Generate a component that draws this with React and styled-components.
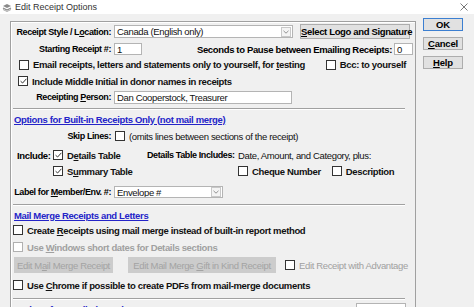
import React from 'react';
import styled, { createGlobalStyle } from 'styled-components';

const Global = createGlobalStyle`
  html, body {
    margin: 0;
    padding: 0;
    background: #f0f0f0;
  }
  body {
    font-family: "Liberation Sans", Arial, sans-serif;
    font-size: 9.5px;
    letter-spacing: -0.35px;
    color: #000;
  }
`;

// Window chrome
const Window = styled.div`
  width: 474px;
  height: 307px;
  overflow: hidden;
  display: flex;
  flex-direction: column;
  background: #f0f0f0;
`;

const TitleBar = styled.div`
  height: 14px;
  flex: none;
  background: #fff;
  display: flex;
  align-items: center;
  padding: 0 6px 0 2px;
  gap: 3px;
  font-size: 9px;
  letter-spacing: 0;
  color: #333;
`;

const TitleText = styled.span`
  flex: 1;
`;

const Body = styled.div`
  display: flex;
  align-items: flex-start;
  padding: 4px 0 0 10px;
`;

const Panel = styled.div`
  margin-top: 3px;
  width: 406px;
  height: 320px;
  border: 1px solid #a0a0a0;
  box-shadow: inset 1px 1px 0 #fff;
  display: flex;
  flex-direction: column;
  padding-left: 2px;
  box-sizing: border-box;
  flex: none;
`;

const Side = styled.div`
  margin-left: 7px;
  display: flex;
  flex-direction: column;
  gap: 6px;
`;

const DialogButton = styled.button`
  width: 40px;
  height: 13px;
  padding: 0;
  font: inherit;
  font-weight: bold;
  font-size: 9.5px;
  letter-spacing: -0.2px;
  background: #e1e1e1;
  border: 1px solid ${(p) => (p.$default ? '#3c7fd1' : '#adadad')};
  color: #000;
  line-height: 11px;
`;

// Rows
const Row = styled.div`
  height: ${(p) => p.$h}px;
  flex: none;
  display: flex;
  align-items: center;
  padding-left: ${(p) => p.$pl || 0}px;
  padding-right: ${(p) => p.$pr || 0}px;
  margin-top: ${(p) => p.$mt || 0}px;
`;

const Cell = styled.div`
  width: ${(p) => p.$w}px;
  flex: none;
  display: flex;
  align-items: center;
  padding-left: ${(p) => p.$pl || 0}px;
  box-sizing: border-box;
`;

const Bold = styled.span`
  font-weight: bold;
  white-space: nowrap;
  font-size: ${(p) => (p.$tight ? '9px' : 'inherit')};
  letter-spacing: ${(p) => (p.$tight ? '-0.4px' : 'inherit')};
`;

const FieldLabel = styled(Bold)`
  width: 98px;
  margin-right: 3px;
  display: flex;
  justify-content: flex-end;
  flex: none;
`;

const Plain = styled.span`
  white-space: nowrap;
  color: ${(p) => (p.$disabled ? '#a0a0a0' : '#111')};
`;

const Spacer = styled.div`
  flex: 1;
`;

const TextBox = styled.div`
  width: ${(p) => p.$w}px;
  height: ${(p) => p.$h || 12}px;
  margin-left: ${(p) => p.$ml || 0}px;
  box-sizing: border-box;
  background: #fff;
  border: 1px solid #b4b4b4;
  display: flex;
  align-items: center;
  padding-left: 2px;
  font-size: 9.5px;
  color: #111;
  white-space: nowrap;
  overflow: hidden;
  flex: none;
`;

const SelectBox = styled(TextBox)`
  padding-right: 1px;
`;

const SelectValue = styled.span`
  flex: 1;
`;

const ArrowBox = styled.span`
  width: 8px;
  height: 8px;
  border: 1px solid #c8c8c8;
  display: flex;
  align-items: center;
  justify-content: center;
  background: #f4f4f4;
`;

const PushButton = styled.button`
  width: ${(p) => p.$w}px;
  height: ${(p) => p.$h || 15}px;
  padding: 0;
  font: inherit;
  font-size: 9.5px;
  letter-spacing: -0.35px;
  font-weight: ${(p) => (p.$disabled ? 'normal' : 'bold')};
  color: ${(p) => (p.$disabled ? '#a3a3a3' : '#000')};
  background: ${(p) => (p.$disabled ? '#cccccc' : '#e1e1e1')};
  border: 1px solid ${(p) => (p.$disabled ? '#cccccc' : '#adadad')};
  margin-left: ${(p) => p.$ml || 0}px;
  flex: none;
  white-space: nowrap;
`;

const Check = styled.label`
  display: flex;
  align-items: center;
  gap: 4px;
  margin-left: ${(p) => p.$ml || 0}px;
  font-weight: ${(p) => (p.$plain ? 'normal' : 'bold')};
  color: ${(p) => (p.$disabled ? '#a0a0a0' : '#111')};
  white-space: nowrap;
`;

const Box = styled.span`
  width: 8px;
  height: 8px;
  border: 1px solid ${(p) => (p.$disabled ? '#b0b0b0' : '#333')};
  background: #fff;
  flex: none;
  display: flex;
  align-items: center;
  justify-content: center;
`;

const Separator = styled.div`
  height: 1px;
  margin: ${(p) => p.$mt}px 10px ${(p) => p.$mb}px 0;
  background: #a0a0a0;
  box-shadow: 0 1px 0 #fff;
  flex: none;
`;

const SectionLink = styled.a`
  color: #2424c8;
  font-weight: bold;
  text-decoration: underline;
  white-space: nowrap;
  cursor: pointer;
`;

function CheckBox({ checked, disabled, plain, ml, children }) {
  return (
    <Check $disabled={disabled} $plain={plain} $ml={ml}>
      <Box $disabled={disabled}>
        {checked && (
          <svg width="7" height="6" viewBox="0 0 7 6">
            <path d="M0.6 3.2 L2.6 5 L6.4 0.8" fill="none" stroke="#333" strokeWidth="1" />
          </svg>
        )}
      </Box>
      <span>{children}</span>
    </Check>
  );
}

function Select({ w, h, children }) {
  return (
    <SelectBox $w={w} $h={h}>
      <SelectValue>{children}</SelectValue>
      <ArrowBox>
        <svg width="6" height="4" viewBox="0 0 6 4">
          <path d="M0.5 0.8 L3 3.2 L5.5 0.8" fill="none" stroke="#888" strokeWidth="0.9" />
        </svg>
      </ArrowBox>
    </SelectBox>
  );
}

export default function App() {
  return (
    <>
      <Global />
      <Window>
        <TitleBar>
          <svg width="10" height="9" viewBox="0 0 10 9">
            <path d="M1 3 L5 1 L9 3 L5 5 Z" fill="#8a8a8a" />
            <path d="M1 5 L5 7 L9 5" fill="none" stroke="#8a8a8a" strokeWidth="1.2" />
            <path d="M1 6.5 L5 8.5 L9 6.5" fill="none" stroke="#aaa" strokeWidth="1" />
          </svg>
          <TitleText>Edit Receipt Options</TitleText>
          <svg width="8" height="8" viewBox="0 0 8 8">
            <path d="M0.5 0.5 L7.5 7.5 M7.5 0.5 L0.5 7.5" stroke="#555" strokeWidth="0.8" />
          </svg>
        </TitleBar>
        <Body>
          <Panel>
            <Row $h={19}>
              <FieldLabel $tight>
                <span>
                  Receipt Style / L<u>o</u>cation:
                </span>
              </FieldLabel>
              <Select w={179} h={13}>Canada (English only)</Select>
              <PushButton $w={110} $h={15} $ml={7}>
                <u>S</u>elect Logo and Signature
              </PushButton>
            </Row>
            <Row $h={16} $pr={2}>
              <FieldLabel $tight>Starting Receipt #:</FieldLabel>
              <TextBox $w={28}>1</TextBox>
              <Spacer />
              <Bold>Seconds to Pause between Emailing Receipts:</Bold>
              <TextBox $w={19} $ml={2}>0</TextBox>
            </Row>
            <Row $h={15} $pl={6} $pr={9}>
              <CheckBox>
                Email receipts, letters and statements only to yourself, for <u>t</u>esting
              </CheckBox>
              <Spacer />
              <CheckBox>Bcc: to yourself</CheckBox>
            </Row>
            <Row $h={18} $pl={5}>
              <CheckBox checked>Include Middle Initial in donor names in receipts</CheckBox>
            </Row>
            <Row $h={14}>
              <FieldLabel $tight>
                <span>
                  Receipting <u>P</u>erson:
                </span>
              </FieldLabel>
              <TextBox $w={178} $h={13}>Dan Cooperstock, Treasurer</TextBox>
            </Row>
            <Separator $mt={4} $mb={3} />
            <Row $h={14} $pl={1}>
              <SectionLink>Options for Built-in Receipts Only (not mail merge)</SectionLink>
            </Row>
            <Row $h={20}>
              <FieldLabel $tight>Skip Lines:</FieldLabel>
              <CheckBox plain ml={1}>
                (omits lines between sections of the receipt)
              </CheckBox>
            </Row>
            <Row $h={18}>
              <Cell $w={40} $pl={4}>
                <Bold>Include:</Bold>
              </Cell>
              <Cell $w={94}>
                <CheckBox checked>
                  D<u>e</u>tails Table
                </CheckBox>
              </Cell>
              <Cell $w={91}>
                <Bold $tight>Details Table Includes:</Bold>
              </Cell>
              <Plain>Date, Amount, and Category, plus:</Plain>
            </Row>
            <Row $h={14}>
              <Cell $w={40} />
              <Cell $w={185}>
                <CheckBox checked>
                  S<u>u</u>mmary Table
                </CheckBox>
              </Cell>
              <CheckBox>Cheque Number</CheckBox>
              <CheckBox ml={11}>Description</CheckBox>
            </Row>
            <Row $h={16} $mt={6}>
              <FieldLabel $tight>
                <span>
                  Label for <u>M</u>ember/Env. #:
                </span>
              </FieldLabel>
              <Select w={109} h={12}>Envelope #</Select>
            </Row>
            <Separator $mt={4} $mb={4} />
            <Row $h={12} $pl={1}>
              <SectionLink>Mail Merge Receipts and Letters</SectionLink>
            </Row>
            <Row $h={18}>
              <CheckBox>
                Create <u>R</u>eceipts using mail merge instead of built-in report method
              </CheckBox>
            </Row>
            <Row $h={16}>
              <CheckBox disabled>
                Use <u>W</u>indows short dates for Details sections
              </CheckBox>
            </Row>
            <Row $h={20} $pl={1}>
              <PushButton $w={99} $h={16} $disabled>
                Edit M<u>a</u>il Merge Receipt
              </PushButton>
              <PushButton $w={148} $h={16} $ml={15} $disabled>
                Edit Mail Merge <u>G</u>ift in Kind Receipt
              </PushButton>
              <Check $ml={9} $plain>
                <Box />
                <Plain $disabled>Edit Receipt with Advantage</Plain>
              </Check>
            </Row>
            <Row $h={20}>
              <CheckBox>
                Use <u>C</u>hrome if possible to create PDFs from mail-merge documents
              </CheckBox>
            </Row>
            <Separator $mt={3} $mb={2} />
            <Row $h={16} $pl={1} $pr={9}>
              <SectionLink>Options for Emailed Receipts</SectionLink>
              <Spacer />
              <Bold>Format:</Bold>
              <TextBox $w={50} $ml={4} />
            </Row>
          </Panel>
          <Side>
            <DialogButton $default>OK</DialogButton>
            <DialogButton>
              <u>C</u>ancel
            </DialogButton>
            <DialogButton>
              <u>H</u>elp
            </DialogButton>
          </Side>
        </Body>
      </Window>
    </>
  );
}
